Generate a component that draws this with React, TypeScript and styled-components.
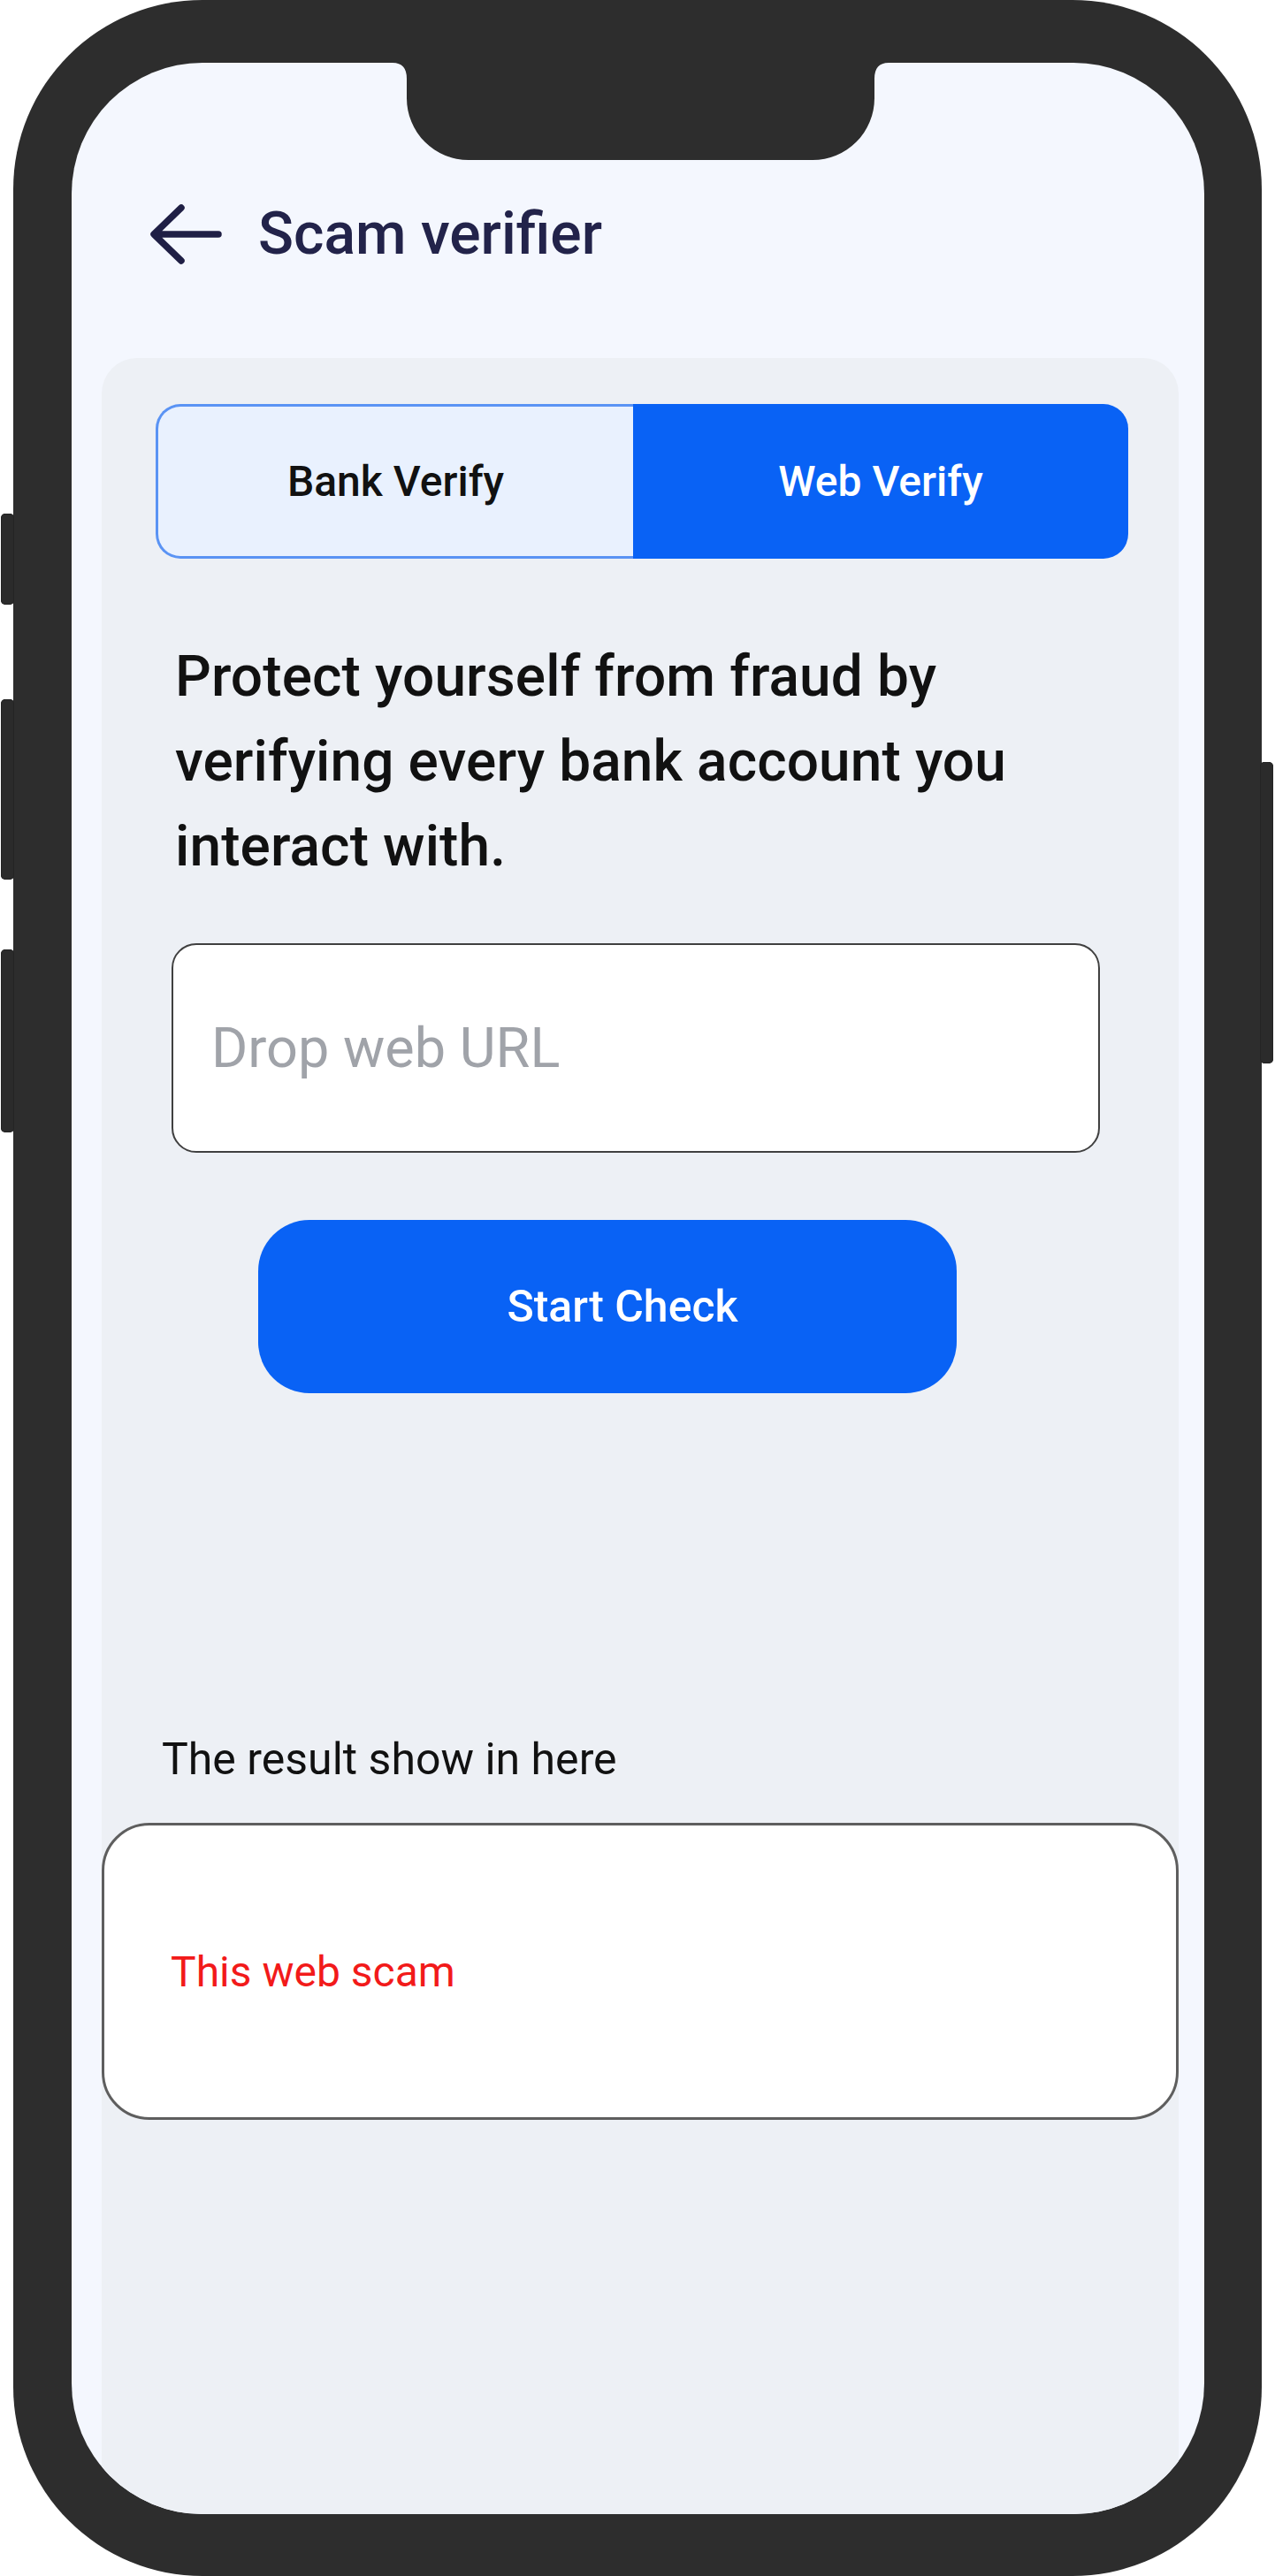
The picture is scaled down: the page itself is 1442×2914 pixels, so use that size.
import React from "react";
import styled, { createGlobalStyle } from "styled-components";

const GlobalStyle = createGlobalStyle`
  html, body {
    margin: 0;
    padding: 0;
    background: #ffffff;
  }
  body {
    font-family: Roboto, "Noto Sans", Arial, sans-serif;
  }
  *, *::before, *::after {
    box-sizing: border-box;
  }
`;

const Phone = styled.div`
  position: relative;
  width: 1412px;
  height: 2914px;
  margin-left: 15px;
  padding: 71px 65px 70px 66px;
  background: #2d2d2d;
  border-radius: 214px;
  display: flex;
`;

const SideButton = styled.div<{ $side: "left" | "right"; $top: number; $height: number }>`
  position: absolute;
  top: ${(p) => p.$top}px;
  height: ${(p) => p.$height}px;
  width: 15px;
  ${(p) => (p.$side === "left" ? "left: -14px;" : "right: -13px;")}
  background: #2b2b2b;
  border-radius: 5px;
  box-shadow: inset 0 0 0 1px #242424;
`;

const Screen = styled.div`
  position: relative;
  flex: 1;
  display: flex;
  flex-direction: column;
  background: #f4f7fe;
  border-radius: 148px;
  overflow: hidden;
`;

const Notch = styled.svg`
  position: absolute;
  top: 0;
  left: 363px;
  width: 561px;
  height: 110px;
`;

const Header = styled.header`
  display: flex;
  align-items: center;
  gap: 41px;
  height: 80px;
  margin: 154px 0 0 0;
  padding-left: 88px;
`;

const BackButton = styled.button`
  display: flex;
  padding: 0;
  border: none;
  background: transparent;
  cursor: pointer;
`;

const Title = styled.h1`
  margin: 0;
  font-size: 66px;
  line-height: 80px;
  font-weight: 500;
  color: #22234a;
`;

const Card = styled.section`
  flex: 1;
  margin: 100px 29px 0 34px;
  padding-top: 52px;
  display: flex;
  flex-direction: column;
  align-items: flex-start;
  background: #edf0f5;
  border-radius: 40px 40px 0 0;
`;

const Toggle = styled.div`
  display: flex;
  width: 1100px;
  height: 175px;
  margin-left: 61px;
`;

const TabButton = styled.button<{ $active?: boolean }>`
  display: flex;
  align-items: center;
  justify-content: center;
  padding: 0;
  font-family: Roboto, "Noto Sans", Arial, sans-serif;
  font-size: 48px;
  font-weight: 500;
  cursor: pointer;
  ${(p) =>
    p.$active
      ? `
    flex: 1;
    background: #0962f5;
    color: #ffffff;
    border: none;
    border-radius: 0 28px 28px 0;
  `
      : `
    width: 540px;
    background: #e9f1fe;
    color: #111111;
    border: 3px solid #5a93f4;
    border-right: none;
    border-radius: 28px 0 0 28px;
  `}
`;

const Heading = styled.h2`
  width: 1040px;
  margin: 86px 0 0 83px;
  font-size: 64px;
  line-height: 96px;
  font-weight: 500;
  letter-spacing: 0.1px;
  color: #111111;
`;

const UrlInput = styled.input`
  width: 1050px;
  height: 237px;
  margin: 61px 0 0 79px;
  padding: 0 0 0 43px;
  border: 2px solid #404040;
  border-radius: 28px;
  background: #ffffff;
  font-family: Roboto, "Noto Sans", Arial, sans-serif;
  font-size: 63px;
  color: #222222;
  outline: none;

  &::placeholder {
    color: #a0a3a9;
  }
`;

const StartButton = styled.button`
  width: 790px;
  height: 196px;
  margin: 76px 0 0 177px;
  padding: 0 0 0 34px;
  border: none;
  border-radius: 58px;
  background: #0962f5;
  color: #ffffff;
  font-family: Roboto, "Noto Sans", Arial, sans-serif;
  font-size: 50px;
  font-weight: 500;
  cursor: pointer;
`;

const ResultLabel = styled.p`
  margin: 384px 0 0 68px;
  font-size: 50px;
  line-height: 60px;
  color: #111111;
`;

const ResultBox = styled.div`
  align-self: stretch;
  height: 336px;
  margin-top: 42px;
  padding-left: 75px;
  display: flex;
  align-items: center;
  background: #ffffff;
  border: 3px solid #5e5e5e;
  border-radius: 54px;
`;

const ResultText = styled.span`
  font-size: 48px;
  color: #f21a1a;
`;

const sideButtons = [
  { side: "left" as const, top: 581, height: 103 },
  { side: "left" as const, top: 791, height: 204 },
  { side: "left" as const, top: 1074, height: 207 },
  { side: "right" as const, top: 862, height: 341 },
];

export default function App() {
  return (
    <>
      <GlobalStyle />
      <Phone>
        {sideButtons.map((b, i) => (
          <SideButton key={i} $side={b.side} $top={b.top} $height={b.height} />
        ))}
        <Screen>
          <Notch viewBox="0 0 561 110" aria-hidden="true">
            <path
              d="M0 0 H561 Q545 0 545 18 V40 A70 70 0 0 1 475 110 H86 A70 70 0 0 1 16 40 V18 Q16 0 0 0 Z"
              fill="#2d2d2d"
            />
          </Notch>
          <Header>
            <BackButton aria-label="Back">
              <svg width="82" height="68" viewBox="0 0 82 68">
                <path
                  d="M78 34 H6 M36 4 L5 34 L36 64"
                  fill="none"
                  stroke="#1f1f45"
                  strokeWidth="7.5"
                  strokeLinecap="round"
                  strokeLinejoin="round"
                />
              </svg>
            </BackButton>
            <Title>Scam verifier</Title>
          </Header>
          <Card>
            <Toggle>
              <TabButton>Bank Verify</TabButton>
              <TabButton $active>Web Verify</TabButton>
            </Toggle>
            <Heading>
              Protect yourself from fraud by verifying every bank account you interact with.
            </Heading>
            <UrlInput placeholder="Drop web URL" />
            <StartButton>Start Check</StartButton>
            <ResultLabel>The result show in here</ResultLabel>
            <ResultBox>
              <ResultText>This web scam</ResultText>
            </ResultBox>
          </Card>
        </Screen>
      </Phone>
    </>
  );
}
